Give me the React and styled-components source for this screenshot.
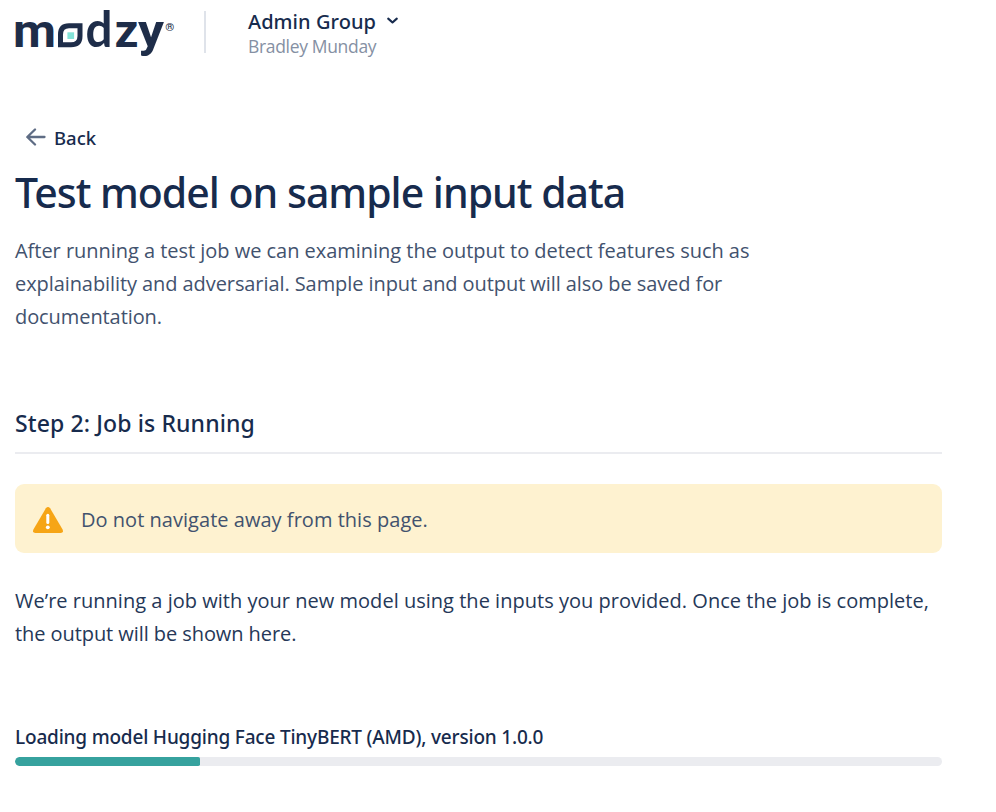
import React from "react";
import styled, { createGlobalStyle } from "styled-components";

const GlobalStyle = createGlobalStyle`
  * { box-sizing: border-box; }
  body {
    margin: 0;
    background: #fff;
    color: #172b4d;
    font-family: "Open Sans", "Noto Sans", sans-serif;
  }
  h1, h2, p { margin: 0; }
`;

const Page = styled.div`
  width: 996px;
  height: 812px;
  padding-left: 15px;
  overflow: hidden;
`;

const Header = styled.header`
  display: flex;
  align-items: flex-start;
  height: 120px;
`;

const Logo = styled.svg`
  display: block;
  width: 165px;
  height: 64px;
  overflow: visible;
  font-family: Roboto, sans-serif;
  fill: #1e2d49;
`;

const TallLetter = styled.text`
  font-family: Lato, sans-serif;
  font-size: 49px;
`;

const Divider = styled.div`
  width: 2px;
  height: 42px;
  margin: 11px 42px 0 24px;
  background: #dfe3ea;
`;

const Account = styled.div`
  padding-top: 8px;
`;

const GroupButton = styled.button`
  display: flex;
  align-items: center;
  gap: 10px;
  padding: 0;
  border: 0;
  background: none;
  color: #172b4d;
  font: 500 20px/27px "Noto Sans", sans-serif;
  letter-spacing: 0.06px;
`;

const ChevronIcon = styled.svg`
  width: 13px;
  height: 9px;
  margin-bottom: 2px;
`;

const UserName = styled.div`
  color: #8590a3;
  font-size: 17.5px;
  line-height: 22px;
  letter-spacing: -0.33px;
`;

const BackLink = styled.a`
  display: flex;
  align-items: center;
  gap: 8px;
  height: 36px;
  padding-left: 11px;
  font: 500 18.5px/36px "Noto Sans", sans-serif;
`;

const ArrowIcon = styled.svg`
  width: 20px;
  height: 18px;
  margin-bottom: 2px;
`;

const Title = styled.h1`
  padding-top: 9px;
  font: 500 41px/54px "Noto Sans", sans-serif;
  letter-spacing: -1px;
`;

const Copy = styled.p`
  color: ${(p) => (p.$strong ? "#253858" : "#42526e")};
  font-size: 20px;
  line-height: 33px;
  margin-top: ${(p) => p.$top}px;
`;

const Line = styled.span`
  display: block;
  white-space: nowrap;
  letter-spacing: ${(p) => p.$track || 0}px;
`;

const Content = styled.main`
  width: 927px;
`;

const StepTitle = styled.h2`
  height: 47px;
  margin-top: 74px;
  border-bottom: 2px solid #ebecf0;
  font: 500 23px/32px "Noto Sans", sans-serif;
  letter-spacing: 0.12px;
`;

const Alert = styled.div`
  display: flex;
  align-items: center;
  gap: 17px;
  height: 69px;
  margin-top: 30px;
  padding-left: 17px;
  border-radius: 9px;
  background: #fef2d0;
  color: #42526e;
  font-size: 20px;
  letter-spacing: 0.03px;
`;

const AlertText = styled.span`
  padding-top: 2px;
`;

const WarningIcon = styled.svg`
  width: 32px;
  height: 28px;
  margin-top: 3px;
`;

const ProgressLabel = styled.div`
  margin-top: 71px;
  font: 500 19px/32px "Noto Sans", sans-serif;
  letter-spacing: -0.19px;
`;

const Track = styled.div`
  height: 9px;
  margin-top: 4px;
  border-radius: 5px;
  background: #ebecf0;
  overflow: hidden;
`;

const Fill = styled.div`
  width: ${(p) => p.$value}%;
  height: 100%;
  border-radius: 5px 2px 2px 5px;
  background: #36a29e;
`;

function ModzyLogo() {
  return (
    <Logo viewBox="0 0 165 64" role="img" aria-label="modzy">
      <g fontSize="45.5" fontWeight="700">
        <text x="-2" y="47.3" textLength="43" lengthAdjust="spacingAndGlyphs">m</text>
        <TallLetter x="70.5" y="47.3" textLength="27" lengthAdjust="spacingAndGlyphs">d</TallLetter>
        <text x="99.5" y="47.3" textLength="24" lengthAdjust="spacingAndGlyphs">z</text>
        <text x="123" y="47.3" textLength="26" lengthAdjust="spacingAndGlyphs">y</text>
      </g>
      <path
        d="M54 25.8H65V36Q65 44.8 56 44.8H45.5V34.5Q45.5 25.8 54 25.8Z"
        fill="none"
        stroke="#1e2d49"
        strokeWidth="5"
      />
      <rect x="52.4" y="32.3" width="6.7" height="6.7" fill="#83e3d8" />
      <text x="150.3" y="30.8" fontSize="11.5" fontWeight="500">®</text>
    </Logo>
  );
}

export default function App() {
  return (
    <Page>
      <GlobalStyle />
      <Header>
        <ModzyLogo />
        <Divider />
        <Account>
          <GroupButton>
            Admin Group
            <ChevronIcon viewBox="0 0 13 9" fill="none" stroke="#172b4d" strokeWidth="2.1" strokeLinecap="round" strokeLinejoin="round">
              <path d="M2.2 2.6L6.5 6.5L10.8 2.6" />
            </ChevronIcon>
          </GroupButton>
          <UserName>Bradley Munday</UserName>
        </Account>
      </Header>

      <Content>
        <BackLink>
          <ArrowIcon viewBox="0 0 20 18" fill="none" stroke="#5e6c84" strokeWidth="2.3" strokeLinecap="round" strokeLinejoin="round">
            <path d="M9 1.5L1.3 9L9 16.5M1.6 9H18.5" />
          </ArrowIcon>
          Back
        </BackLink>
        <Title>Test model on sample input data</Title>
        <Copy $top={15}>
          <Line $track={-0.03}>After running a test job we can examining the output to detect features such as</Line>
          <Line $track={-0.08}>explainability and adversarial. Sample input and output will also be saved for</Line>
          <Line $track={-0.08}>documentation.</Line>
        </Copy>

        <StepTitle>Step 2: Job is Running</StepTitle>
        <Alert>
          <WarningIcon viewBox="0 0 32 28">
            <path
              d="M13.9 2.3Q16 -.5 18.1 2.3L30.6 23.6Q31.8 27 28.6 27H3.4Q.2 27 1.4 23.6Z"
              fill="#f6a516"
            />
            <path d="M15.8 9.3V16.4" stroke="#fff" strokeWidth="3" strokeLinecap="round" />
            <circle cx="15.8" cy="21.3" r="1.9" fill="#fff" />
          </WarningIcon>
          <AlertText>Do not navigate away from this page.</AlertText>
        </Alert>
        <Copy $strong $top={31}>
          <Line $track={0.02}>We’re running a job with your new model using the inputs you provided. Once the job is complete,</Line>
          <Line $track={-0.07}>the output will be shown here.</Line>
        </Copy>

        <ProgressLabel>Loading model Hugging Face TinyBERT (AMD), version 1.0.0</ProgressLabel>
        <Track>
          <Fill $value={20} />
        </Track>
      </Content>
    </Page>
  );
}
